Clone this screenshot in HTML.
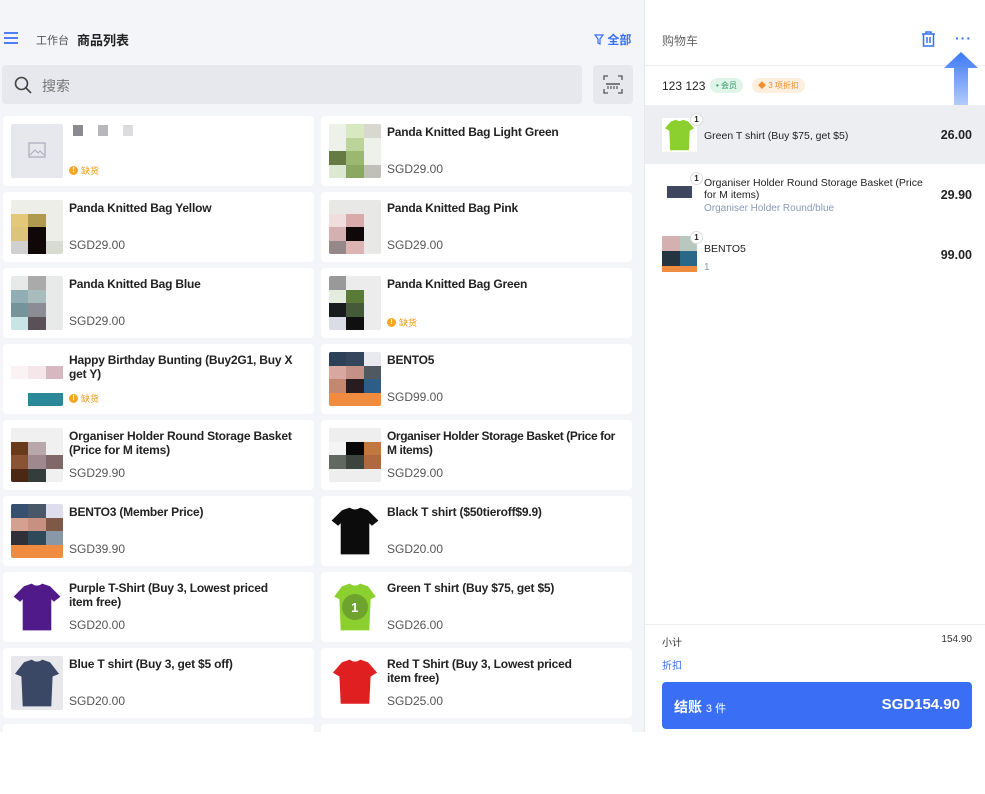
<!DOCTYPE html>
<html><head><meta charset="utf-8">
<style>
*{box-sizing:border-box;margin:0;padding:0}
body{width:985px;height:732px;overflow:hidden;font-family:"Liberation Sans","Noto Sans CJK SC",sans-serif;background:#fff;position:relative;color:#222}
#left{position:absolute;left:0;top:0;width:644px;height:732px;background:#f4f5f8}
#right{position:absolute;left:644px;top:0;width:341px;height:732px;background:#fff;border-left:1px solid #e8e9ed}
.card{position:absolute;width:311px;height:70px;background:#fff;border-radius:4px}
.img{position:absolute;left:8px;top:8px;width:52px;height:54px;display:grid;grid-template-columns:repeat(3,1fr);grid-template-rows:repeat(4,1fr);overflow:hidden;border-radius:2px}
.t{position:absolute;left:66px;top:9px;font-size:12px;font-weight:bold;line-height:14px;width:240px;color:#222;white-space:nowrap;letter-spacing:-0.2px}
.p{position:absolute;left:66px;top:46px;font-size:12px;color:#555}
.oos{position:absolute;left:66px;top:48px;font-size:9px;color:#f09a1a;display:flex;align-items:center;gap:3px}
.oos i{display:inline-block;width:9px;height:9px;border-radius:50%;background:#f5a623;color:#fff;font-style:normal;font-size:7px;text-align:center;line-height:9px;font-weight:bold}
.blue{color:#3a6ef5}
.ci{position:absolute;left:0;width:341px}
.badge{position:absolute;width:13px;height:13px;border-radius:50%;background:#fff;border:1px solid #ddd;font-size:8px;text-align:center;line-height:11px;font-weight:bold}
</style></head><body>
<div id="left">
  <svg style="position:absolute;left:4px;top:32px" width="14" height="12" viewBox="0 0 14 12"><path d="M0 1h14M0 6h14M0 11h14" stroke="#3a6ef5" stroke-width="1.8"/></svg>
  <div style="position:absolute;left:36px;top:32px;font-size:11px;color:#555">工作台</div>
  <div style="position:absolute;left:77px;top:30px;font-size:13px;font-weight:bold;color:#222">商品列表</div>
  <div style="position:absolute;left:594px;top:31px;font-size:12px;font-weight:bold" class="blue"><svg width="10" height="11" viewBox="0 0 10 11" style="vertical-align:-1px"><path d="M1 1h8L6 5v5L4 9V5z" fill="none" stroke="#3a6ef5" stroke-width="1.2"/></svg> 全部</div>
  <div style="position:absolute;left:2px;top:65px;width:580px;height:39px;background:#e6e8ed;border-radius:4px"></div>
  <svg style="position:absolute;left:14px;top:76px" width="18" height="18" viewBox="0 0 18 18"><circle cx="7.5" cy="7.5" r="6" fill="none" stroke="#444" stroke-width="1.6"/><path d="M12 12l5 5" stroke="#444" stroke-width="1.6"/></svg>
  <div style="position:absolute;left:42px;top:76px;font-size:14px;color:#777">搜索</div>
  <div style="position:absolute;left:593px;top:65px;width:40px;height:39px;background:#e6e8ed;border-radius:4px"></div>
  <svg style="position:absolute;left:603px;top:75px" width="20" height="19" viewBox="0 0 20 19"><path d="M1 5V1h4M15 1h4v4M19 14v4h-4M5 18H1v-4" fill="none" stroke="#555" stroke-width="1.3"/><path d="M3 9h14" stroke="#555" stroke-width="1.5"/><path d="M5 11v3M8 11v3M11 11v3M14 11v3" stroke="#555" stroke-width="1.2"/></svg>

  <div class="card" style="left:3px;top:116px">
    <div class="img" style="background:#e6e8ee;display:block"><svg style="margin:18px 0 0 17px" width="18" height="16" viewBox="0 0 18 16"><rect x="1" y="1" width="16" height="14" fill="none" stroke="#aab" stroke-width="1.2"/><path d="M2 13l5-5 3 3 2-2 4 4" fill="none" stroke="#aab"/></svg></div>
    <div style="position:absolute;left:70px;top:9px;width:10px;height:11px;background:#8a8a90"></div>
    <div style="position:absolute;left:95px;top:9px;width:10px;height:11px;background:#b8b8bc"></div>
    <div style="position:absolute;left:120px;top:9px;width:10px;height:11px;background:#dcdcde"></div>
    <div class="oos"><i>!</i>缺货</div>
  </div>
  <div class="card" style="left:321px;top:116px">
    <div class="img" style="background:#eef0ea"><span></span><span style="background:#d8e8c0"></span><span style="background:#d8d8d0"></span><span></span><span style="background:#bcd49a"></span><span></span><span style="background:#667a44"></span><span style="background:#9ab870"></span><span></span><span style="background:#dde8d0"></span><span style="background:#8aa860"></span><span style="background:#c0c0b8"></span></div>
    <div class="t">Panda Knitted Bag Light Green</div><div class="p">SGD29.00</div>
  </div>
  <div class="card" style="left:3px;top:192px">
    <div class="img" style="background:#eeeee8"><span></span><span></span><span></span><span style="background:#e2c878"></span><span style="background:#b09a50"></span><span></span><span style="background:#dcc47a"></span><span style="background:#100808"></span><span></span><span style="background:#d0d0d0"></span><span style="background:#100808"></span><span style="background:#d8dcd0"></span></div>
    <div class="t">Panda Knitted Bag Yellow</div><div class="p">SGD29.00</div>
  </div>
  <div class="card" style="left:321px;top:192px">
    <div class="img" style="background:#e8e8e6"><span></span><span></span><span></span><span style="background:#f0dede"></span><span style="background:#d8aaaa"></span><span></span><span style="background:#d4b0b0"></span><span style="background:#100808"></span><span></span><span style="background:#948888"></span><span style="background:#dcb4b4"></span><span></span></div>
    <div class="t">Panda Knitted Bag Pink</div><div class="p">SGD29.00</div>
  </div>
  <div class="card" style="left:3px;top:268px">
    <div class="img" style="background:#e8eaea"><span></span><span style="background:#aaaaaa"></span><span></span><span style="background:#90aeb4"></span><span style="background:#a8bcbc"></span><span></span><span style="background:#74949a"></span><span style="background:#8c8c96"></span><span></span><span style="background:#c8e4e4"></span><span style="background:#5a5058"></span><span></span></div>
    <div class="t">Panda Knitted Bag Blue</div><div class="p">SGD29.00</div>
  </div>
  <div class="card" style="left:321px;top:268px">
    <div class="img" style="background:#ececec"><span style="background:#999"></span><span></span><span></span><span style="background:#e4ece0"></span><span style="background:#5a7a38"></span><span></span><span style="background:#181c1c"></span><span style="background:#445a38"></span><span></span><span style="background:#dcdce6"></span><span style="background:#101010"></span><span></span></div>
    <div class="t">Panda Knitted Bag Green</div><div class="oos"><i>!</i>缺货</div>
  </div>
  <div class="card" style="left:3px;top:344px">
    <div class="img" style="background:#fff"><span></span><span></span><span></span><span style="background:#fbf2f4"></span><span style="background:#f5e6ea"></span><span style="background:#d8b8c0"></span><span></span><span></span><span></span><span></span><span style="background:#2a8898"></span><span style="background:#2a8898"></span></div>
    <div class="t">Happy Birthday Bunting (Buy2G1, Buy X<br>get Y)</div><div class="oos"><i>!</i>缺货</div>
  </div>
  <div class="card" style="left:321px;top:344px">
    <div class="img"><span style="background:#2c4058"></span><span style="background:#34465c"></span><span style="background:#e8eaf0"></span><span style="background:#d8a8a0"></span><span style="background:#c49088"></span><span style="background:#505860"></span><span style="background:#c48870"></span><span style="background:#281c20"></span><span style="background:#2e5e88"></span><span style="background:#f08c40"></span><span style="background:#f08c40"></span><span style="background:#f08c40"></span></div>
    <div class="t">BENTO5</div><div class="p">SGD99.00</div>
  </div>
  <div class="card" style="left:3px;top:420px">
    <div class="img" style="background:#f0f0f0"><span></span><span></span><span></span><span style="background:#6a3a1c"></span><span style="background:#b8a8ac"></span><span></span><span style="background:#8a5434"></span><span style="background:#a08890"></span><span style="background:#806868"></span><span style="background:#4a2814"></span><span style="background:#343c3c"></span><span></span></div>
    <div class="t">Organiser Holder Round Storage Basket<br>(Price for M items)</div><div class="p">SGD29.90</div>
  </div>
  <div class="card" style="left:321px;top:420px">
    <div class="img" style="background:#eee"><span></span><span></span><span></span><span style="background:#f4f4f4"></span><span style="background:#080808"></span><span style="background:#c07840"></span><span style="background:#606860"></span><span style="background:#3c4440"></span><span style="background:#b06840"></span><span></span><span></span><span></span></div>
    <div class="t" style="letter-spacing:-0.4px">Organiser Holder Storage Basket (Price for<br>M items)</div><div class="p">SGD29.00</div>
  </div>
  <div class="card" style="left:3px;top:496px">
    <div class="img"><span style="background:#385070"></span><span style="background:#485868"></span><span style="background:#dde"></span><span style="background:#d4a090"></span><span style="background:#c89080"></span><span style="background:#805848"></span><span style="background:#303038"></span><span style="background:#2e4a5a"></span><span style="background:#8898a8"></span><span style="background:#f08c40"></span><span style="background:#f08c40"></span><span style="background:#f08c40"></span></div>
    <div class="t">BENTO3 (Member Price)</div><div class="p">SGD39.90</div>
  </div>
  <div class="card" style="left:321px;top:496px">
    <div class="img" style="display:block"><svg width="52" height="54" viewBox="0 0 40 40"><path d="M10 4L16 2Q20 5 24 2L30 4L38 12L33 16L31 14L31 38L9 38L9 14L7 16L2 12Z" fill="#0c0c0c"/></svg></div>
    <div class="t">Black T shirt ($50tieroff$9.9)</div><div class="p">SGD20.00</div>
  </div>
  <div class="card" style="left:3px;top:572px">
    <div class="img" style="display:block"><svg width="52" height="54" viewBox="0 0 40 40"><path d="M10 4L16 2Q20 5 24 2L30 4L38 12L33 16L31 14L31 38L9 38L9 14L7 16L2 12Z" fill="#501a8a"/></svg></div>
    <div class="t">Purple T-Shirt (Buy 3, Lowest priced<br>item free)</div><div class="p">SGD20.00</div>
  </div>
  <div class="card" style="left:321px;top:572px">
    <div class="img" style="display:block"><svg width="52" height="54" viewBox="0 0 40 40"><path d="M10 4L16 2Q20 5 24 2L30 4L36 12L32 14L31 38L9 38L8 14L4 12Z" fill="#8cd030"/><circle cx="20" cy="20" r="10" fill="#2a3a2a" opacity=".3"/><text x="17" y="24" font-size="10" fill="#fff" font-family="Liberation Sans" font-weight="bold">1</text></svg></div>
    <div class="t">Green T shirt (Buy $75, get $5)</div><div class="p">SGD26.00</div>
  </div>
  <div class="card" style="left:3px;top:648px">
    <div class="img" style="display:block;background:#e8e8ec"><svg width="52" height="54" viewBox="0 0 40 40"><path d="M10 4L16 2Q20 5 24 2L30 4L37 13L32 15L31 38L9 38L8 15L3 13Z" fill="#3a4866"/></svg></div>
    <div class="t">Blue T shirt (Buy 3, get $5 off)</div><div class="p">SGD20.00</div>
  </div>
  <div class="card" style="left:321px;top:648px">
    <div class="img" style="display:block"><svg width="52" height="54" viewBox="0 0 40 40"><path d="M10 4L16 2Q20 5 24 2L30 4L37 12L32 15L31 36L9 36L8 15L3 12Z" fill="#e02020"/></svg></div>
    <div class="t">Red T Shirt (Buy 3, Lowest priced<br>item free)</div><div class="p">SGD25.00</div>
  </div>
  <div class="card" style="left:3px;top:724px"></div>
  <div class="card" style="left:321px;top:724px"></div>
</div>

<div id="right">
  <div style="position:absolute;left:17px;top:32px;font-size:12px;color:#666">购物车</div>
  <svg style="position:absolute;left:276px;top:31px" width="15" height="16" viewBox="0 0 15 16"><path d="M1 3h13M5 3V1h5v2M2.5 3.5V15h10V3.5M6 6v6M9 6v6" fill="none" stroke="#3a6ef5" stroke-width="1.5"/></svg>
  <div style="position:absolute;left:310px;top:30px;font-size:14px;font-weight:bold;letter-spacing:1px" class="blue">···</div>
  <div style="position:absolute;left:0;top:65px;width:341px;height:1px;background:#eceef2"></div>
  <div style="position:absolute;left:17px;top:79px;font-size:12px;color:#222">123 123</div>
  <div style="position:absolute;left:65px;top:78px;height:15px;padding:0 6px;border-radius:8px;background:#dff5ea;color:#2a9a60;font-size:8px;line-height:15px">• 会员</div>
  <div style="position:absolute;left:107px;top:78px;height:15px;padding:0 6px;border-radius:8px;background:#fdeede;color:#f09030;font-size:8px;line-height:15px">◆ 3 项折扣</div>
  <svg style="position:absolute;left:297px;top:50px" width="38" height="75" viewBox="0 0 38 75"><defs><linearGradient id="g" x1="0" y1="0" x2="0" y2="1"><stop offset="0" stop-color="#3a78f5"/><stop offset="1" stop-color="#3a78f5" stop-opacity=".15"/></linearGradient></defs><path d="M19 2L36 18H26V75H12V18H2Z" fill="url(#g)"/></svg>

  <div class="ci" style="top:105px;height:59px;background:#eceef2"></div>
  <div style="position:absolute;left:17px;top:118px;width:35px;height:34px;background:#fff;display:block"><svg width="35" height="34" viewBox="0 0 40 40"><path d="M10 4L16 2Q20 5 24 2L30 4L37 12L32 15L31 38L9 38L8 15L3 12Z" fill="#8cd030"/></svg></div>
  <div class="badge" style="left:45px;top:113px">1</div>
  <div style="position:absolute;left:59px;top:130px;font-size:10.5px">Green T shirt (Buy $75, get $5)</div>
  <div style="position:absolute;right:13px;top:128px;font-size:12.5px;font-weight:bold">26.00</div>

  <div style="position:absolute;left:22px;top:186px;width:25px;height:12px;background:#404860"></div>
  <div class="badge" style="left:45px;top:172px">1</div>
  <div style="position:absolute;left:59px;top:177px;font-size:10.5px;line-height:12px;width:230px">Organiser Holder Round Storage Basket (Price for M items)</div>
  <div style="position:absolute;left:59px;top:203px;font-size:10px;color:#8a9ab8">Organiser Holder Round/blue</div>
  <div style="position:absolute;right:13px;top:188px;font-size:12.5px;font-weight:bold">29.90</div>

  <div style="position:absolute;left:17px;top:236px;width:35px;height:36px;display:grid;grid-template-columns:1fr 1fr;grid-template-rows:1fr 1fr 6px"><span style="background:#d4b0b0"></span><span style="background:#b8c8c0"></span><span style="background:#243440"></span><span style="background:#2a6888"></span><span style="background:#f08c40"></span><span style="background:#f08c40"></span></div>
  <div class="badge" style="left:45px;top:231px">1</div>
  <div style="position:absolute;left:59px;top:243px;font-size:10.5px">BENTO5</div>
  <div style="position:absolute;left:59px;top:262px;font-size:10px;color:#8a9ab8">1</div>
  <div style="position:absolute;right:13px;top:248px;font-size:12.5px;font-weight:bold">99.00</div>

  <div style="position:absolute;left:0;top:624px;width:341px;height:1px;background:#eceef2"></div>
  <div style="position:absolute;left:17px;top:634px;font-size:10px;color:#333">小计</div>
  <div style="position:absolute;right:13px;top:634px;font-size:10px;color:#333">154.90</div>
  <div style="position:absolute;left:17px;top:657px;font-size:10px" class="blue">折扣</div>
  <div style="position:absolute;left:17px;top:682px;width:310px;height:47px;background:#3a6ef5;border-radius:4px;color:#fff">
    <div style="position:absolute;left:12px;top:15px;font-size:14px;font-weight:bold">结账 <span style="font-size:11px;font-weight:normal">3 件</span></div>
    <div style="position:absolute;right:12px;top:14px;font-size:15px;font-weight:bold">SGD154.90</div>
  </div>
</div>
</body></html>
